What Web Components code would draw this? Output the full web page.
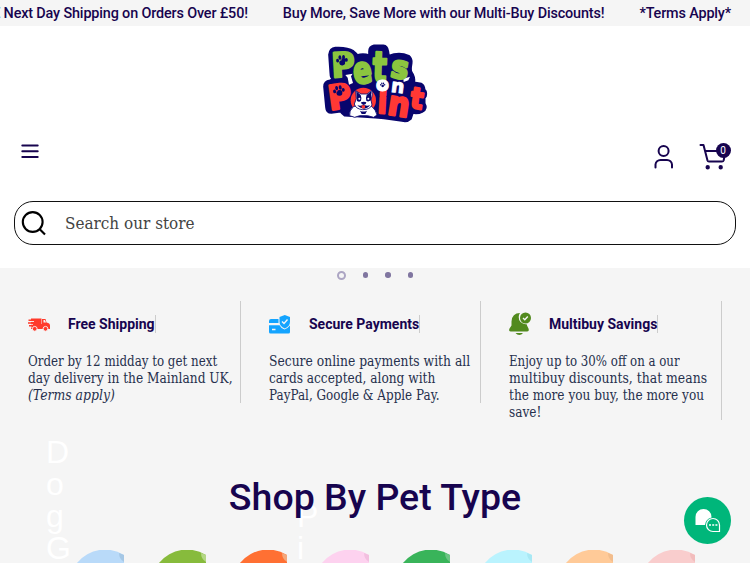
<!DOCTYPE html>
<html lang="en">
<head>
<meta charset="utf-8">
<title>Pets on Point</title>
<style>
    body {
        margin: 0;
        height: 563px;
        overflow: hidden;
        background: #f5f5f5;
        color: #17044f;
        font-family: Roboto, "Liberation Sans", sans-serif;
    }
</style>
</head>
<body>
<pets-page></pets-page>

<script>
// Base: every component clones its markup into an open shadow root
class PetsElement extends HTMLElement {
    constructor() {
        super();
        const template = document.createElement('template');
        template.innerHTML = this.render();
        this.attachShadow({ mode: 'open' }).appendChild(template.content);
    }
}

class AnnouncementBar extends PetsElement {
    render() {
        return `
        <style>
            :host {
                display: flex;
                justify-content: flex-end;
                gap: 35px;
                height: 26px;
                padding-right: 19px;
                overflow: hidden;
                background: #f5f5f5;
                font-size: 14.400px;
                font-weight: 500;
                letter-spacing: -.145px;
                line-height: 28px;
                white-space: nowrap;
            }
            span { flex: none; }
        </style>
        <span>FREE Next Day Shipping on Orders Over £50!</span>
        <span>Buy More, Save More with our Multi-Buy Discounts!</span>
        <span>*Terms Apply*</span>`;
    }
}

class PetsLogo extends PetsElement {
    render() {
        const paw = `<ellipse cx="0" cy="6" rx="8" ry="7"/><ellipse cx="-12" cy="-1" rx="4" ry="5"/><ellipse cx="-5" cy="-9" rx="4" ry="6"/><ellipse cx="5" cy="-9" rx="4" ry="6"/><ellipse cx="12" cy="-1" rx="4" ry="5"/>`;
        return `
        <style>
            :host { display: block; width: 130px; height: 95px; }
            svg { display: block; }
            text {
                font-family: "DejaVu Sans", sans-serif;
                font-weight: 700;
                text-anchor: middle;
                stroke-linejoin: round;
            }
            .green { fill: #8bc53f; stroke: #8bc53f; stroke-width: 8; }
            .red { fill: #ff3834; stroke: #ff3834; stroke-width: 8; }
            .white { fill: #fff; stroke: #fff; stroke-width: 3; }
        </style>
        <svg width="130" height="95" viewBox="0 0 390 285">
            <path d="M76 36Q112 34 130 46 140 54 142 58 160 52 178 59V46Q178 32 192 29H220Q232 30 234 46L236 60Q268 48 296 60 306 68 304 82 300 104 305 110 314 122 312 140L334 144Q342 148 343 162 350 166 347 180L343 186 343 202Q352 218 338 226 322 234 308 230L302 248Q292 258 276 254L222 246 196 244 104 238Q94 230 92 226L64 230Q50 230 49 214L43 152Q43 136 60 134L70 130Q62 126 62 112L58 56Q60 38 76 36Z" fill="#08056d" stroke="#08056d" stroke-width="7" stroke-linejoin="round"/>
            <path d="m106 117 22-4-5 8 6 20-12 5-4-21ZM280 128l20-6-5 11-14 5Z" fill="#fff"/>
            <g class="green">
                <text font-size="100" transform="translate(101 122) rotate(-3) scale(.94 1)">P</text>
                <text font-size="110" transform="translate(162 141) rotate(-8) scale(.75 1)">e</text>
                <text font-size="126" transform="translate(208 137) rotate(2) scale(.7 1)">t</text>
                <text font-size="92" transform="translate(265 126) rotate(10) scale(.95 1)">s</text>
            </g>
            <g class="red">
                <text font-size="100" transform="translate(94 217) rotate(-8) scale(.94 1)">P</text>
                <text font-size="86" transform="translate(216 231) rotate(3) scale(.9 1)">i</text>
                <text font-size="100" transform="translate(262 239) rotate(9) scale(.9 1)">n</text>
                <text font-size="86" transform="translate(317 217) rotate(8) scale(.9 1)">t</text>
            </g>
            <g class="white">
                <text font-size="58" transform="translate(218 164) rotate(-2)">o</text>
                <text font-size="56" transform="translate(261 170) rotate(7)">n</text>
            </g>
            <circle cx="218" cy="147" r="14" fill="#fff"/>
            <g fill="#08056d">
                <g transform="translate(96 74) rotate(-5) scale(1.1)">${paw}</g>
                <g transform="translate(87 165) rotate(-10) scale(1.1)">${paw}</g>
                <g transform="translate(218 147) scale(.5)">${paw}</g>
            </g>
            <circle cx="160" cy="193" r="38" fill="#ff3834"/>
            <g fill="#fff" stroke="#08056d" stroke-width="2.5" stroke-linejoin="round">
                <path d="M131 211q-15 14-12 28l15 5 15-5 24 0 18 5 10-7q-3-15-16-26Z"/>
                <path d="m139 188-2-24 16 10 18 0 14-11q5 11-2 29l3 15q-6 14-28 14-21-2-25-17Z"/>
            </g>
            <g fill="#08056d">
                <path d="m139 166 13 11q4 10 1 17-5 6-12 1ZM184 165l-14 12q-4 10-1 17 5 5 14-1Z"/>
                <path d="M153 199q9-4 16 0 0 7-8 8-8-1-8-8ZM142 207q8 4 17 0h5q8 4 16 0-5 10-18 11-13-1-20-11Z"/>
                <path d="M150 224q10 5 21 0l-5 10h-11Z"/>
            </g>
            <path d="M155 208h10v7q-5 5-10 0Z" fill="#ff3834"/>
            <circle cx="148" cy="188" r="3" fill="#fff"/><circle cx="175" cy="188" r="3" fill="#fff"/>
        </svg>`;
    }
}

class SiteHeader extends PetsElement {
    render() {
        return `
        <style>
            :host { display: block; height: 242px; background: #fff; }
            .brand { display: flex; justify-content: center; padding-top: 10px; height: 95px; }
            .tools {
                display: flex;
                justify-content: space-between;
                align-items: flex-start;
                height: 70px;
                box-sizing: border-box;
                padding: 10px 17px 0 17px;
            }
            .actions { display: flex; gap: 21px; }
            .cart { position: relative; }
            svg { display: block; fill: none; stroke: #17044f; stroke-width: 2; stroke-linecap: round; stroke-linejoin: round; }
            .badge {
                position: absolute;
                left: 16.500px;
                top: 1.500px;
                width: 15px;
                height: 15px;
                border-radius: 50%;
                background: #17044f;
                color: #fff;
                font-size: 10px;
                line-height: 16px;
                text-align: center;
            }
            search-box { margin: 0 14px; }
        </style>
        <div class="brand"><pets-logo></pets-logo></div>
        <div class="tools">
            <svg width="24" height="20" viewBox="0 0 24 20"><path d="M5.300 4.500h15.400M5.300 10.200h15.400M5.300 16h15.400"/></svg>
            <div class="actions">
                <svg width="28" height="32" viewBox="0 0 28 32"><circle cx="13.600" cy="10" r="5"/><path d="M5.500 26.500v-3a5 5 0 0 1 5-4.500h6.500a5 5 0 0 1 5 4.500v3"/></svg>
                <div class="cart">
                    <svg width="34" height="32" viewBox="0 0 34 32">
                        <path d="M1.500 4h3l4 15.500q.3 1 1.500 1h13q1.300 0 1.600-1l2-8.500M6 10h12"/>
                        <circle cx="8.700" cy="26.300" r="1.200" fill="#17044f"/><circle cx="21.700" cy="26.300" r="1.200" fill="#17044f"/>
                    </svg>
                    <span class="badge">0</span>
                </div>
            </div>
        </div>
        <search-box></search-box>`;
    }
}

class SearchBox extends PetsElement {
    render() {
        return `
        <style>
            :host {
                display: flex;
                align-items: center;
                box-sizing: border-box;
                height: 44px;
                border: 1px solid #111;
                border-radius: 19px;
                background: #fff;
                color: #444;
                font: 17px "Roboto Slab", "DejaVu Serif", serif;
            }
            svg { margin: 0 17px 0 6px; fill: none; stroke: #000; stroke-width: 2.100; }
            fit-text { padding-bottom: 1px; }
        </style>
        <svg width="27" height="28" viewBox="0 0 27 28"><circle cx="11.700" cy="13" r="9.900"/><path d="m18.500 20 5.500 5.500"/></svg>
        <fit-text size="17" width="130">Search our store</fit-text>`;
    }
}

// One line of slab text, spread over a set width
class FitText extends PetsElement {
    render() {
        return `
        <style>
            :host { display: block; white-space: nowrap; transform-origin: 0 50%; width: max-content; }
        </style>
        <slot></slot>`;
    }
    connectedCallback() {
        this.style.fontSize = this.getAttribute('size') + 'px';
        requestAnimationFrame(() => {
            const scale = Number(this.getAttribute('width')) / this.offsetWidth;
            this.style.transform = 'scaleX(' + scale + ')';
        });
    }
}

class SlideDots extends PetsElement {
    render() {
        return `
        <style>
            :host { display: flex; justify-content: center; align-items: center; gap: 17px; height: 14px; }
            i { width: 5.500px; height: 5.500px; border-radius: 50%; background: #8076a0; }
            .current { box-sizing: border-box; width: 9px; height: 9px; border: 2px solid #aca5c3; background: none; }
        </style>
        <i class="current"></i><i></i><i></i><i></i>`;
    }
}

class FeatureCard extends PetsElement {
    render() {
        return `
        <style>
            :host { display: block; box-sizing: border-box; padding-top: 9px; border-right: 1px solid #ccc; }
            .head { display: flex; align-items: center; height: 27px; }
            .icon { width: 40px; height: 24px; }
            h3 {
                margin: 0;
                height: 18px;
                border-right: 1px solid #ccc;
                font-size: 14px;
                font-weight: 700;
                line-height: 18px;
            }
            .copy {
                margin-top: 16px;
                margin-bottom: -1px;
                color: #26304d;
                font: 14px/17px "Roboto Slab", "DejaVu Serif", serif;
            }
        </style>
        <div class="head"><div class="icon"><slot name="icon"></slot></div><h3><slot name="title"></slot></h3></div>
        <div class="copy"><slot></slot></div>`;
    }
}

class FeatureRow extends PetsElement {
    render() {
        return `
        <style>
            :host {
                display: grid;
                grid-template-columns: 213px 212px 213px;
                column-gap: 28px;
                align-items: start;
                padding: 19px 0 0 28px;
                height: 119px;
            }
            svg { display: block; overflow: visible; }
        </style>
        <feature-card>
            <svg slot="icon" width="22" height="24" viewBox="0 0 22 24">
                <path d="M3 6.500h10.500v10.500H3ZM14 7h3.500l1 3.500q3.500.5 3.500 3v3.500h-9v-5h1Z" fill="#ff3a2b"/>
                <path d="M0 9.500h6M0 12.300h5M0 15h4" stroke="#f5f5f5" stroke-width=".900"/>
                <path d="M.500 8.200h5M0 11h5M1 13.700h4" stroke="#ff3a2b" stroke-width="1.400"/>
                <path d="M15.500 8h1.500l1 2.500h-2.500Z" fill="#f5f5f5"/>
                <g fill="#ff3a2b" stroke="#f5f5f5" stroke-width=".9"><circle cx="6.700" cy="16.800" r="2.400"/><circle cx="17.500" cy="16.800" r="2.400"/></g>
            </svg>
            <span slot="title">Free Shipping</span>
            <fit-text size="14" width="189">Order by 12 midday to get next</fit-text>
            <fit-text size="14" width="205">day delivery in the Mainland UK,</fit-text>
            <fit-text size="14" width="87"><em>(Terms apply)</em></fit-text>
        </feature-card>
        <feature-card>
            <svg slot="icon" width="22" height="24" viewBox="0 0 22 24">
                <path d="M0 9q0-2 2-2h7.500v4H0ZM0 13.300h10.500q1.500 3.200 5 4.200 3-1 5.500-4v6.500q0 1.500-1.500 1.500h-18Q0 21.500 0 20Z" fill="#14a4ff"/>
                <path d="m15.800 3 5.200 2v4.500q0 5-5.200 7-5.300-2-5.300-7V5Z" fill="#14a4ff"/>
                <path d="m13 9.500 2 2 3.500-4M3 17.500h3.500" fill="none" stroke="#f5f5f5" stroke-width="1.400"/>
            </svg>
            <span slot="title">Secure Payments</span>
            <fit-text size="14" width="201">Secure online payments with all</fit-text>
            <fit-text size="14" width="166">cards accepted, along with</fit-text>
            <fit-text size="14" width="171">PayPal, Google &amp; Apple Pay.</fit-text>
        </feature-card>
        <feature-card>
            <svg slot="icon" width="22" height="24" viewBox="0 0 22 24">
                <path d="M11 1Q3 1 2.500 9.500v4L.500 16.500q-1.200 3 1.300 3H18q2.500 0 1.500-3l-1.500-3v-1Q9.500 11.500 9.700 5 9.800 2.500 11 1ZM6.500 21h7.500q-1.500 2-3.700 2t-3.800-2Z" fill="#528a1e"/>
                <circle cx="16.500" cy="6" r="5.500" fill="#528a1e"/>
                <path d="m14 6 1.800 1.700 3-3.200" fill="none" stroke="#f5f5f5" stroke-width="1.400"/>
            </svg>
            <span slot="title">Multibuy Savings</span>
            <fit-text size="14" width="171">Enjoy up to 30% off on a our</fit-text>
            <fit-text size="14" width="198">multibuy discounts, that means</fit-text>
            <fit-text size="14" width="195">the more you buy, the more you</fit-text>
            <fit-text size="14" width="32">save!</fit-text>
        </feature-card>`;
    }
}

class PetTypes extends PetsElement {
    render() {
        const pets = [
            ['#b9daf9', '#a5c7e5'], ['#87bb3c', '#b4d785'], ['#ff7033', '#f4a77b'], ['#fdd2ef', '#f2bfdf'],
            ['#39b45a', '#6bc583'], ['#baf3fe', '#a8e8f4'], ['#ffca98', '#f2bd8d'], ['#f9cdcd', '#f2bcbc']
        ];
        // Only the top of each disc shows; its right side is cut straight
        const circles = pets.map(([fill, accent]) => `
            <svg width="55" height="14" viewBox="0 0 55 14">
                <path d="M0 36A36 36 0 0 1 55 5V36Z" fill="${fill}"/>
                <path d="M55 12q-5-3-5-9l5 2Z" fill="${accent}"/>
            </svg>`).join('');
        return `
        <style>
            :host { display: block; position: relative; height: 143px; overflow: hidden; }
            .label {
                position: absolute;
                color: #fff;
                font-family: "Liberation Sans", sans-serif;
                font-size: 32px;
                line-height: 32px;
            }
            .dog { left: 46px; top: 16px; }
            .pig { left: 297px; top: 80px; }
            h2 {
                position: relative;
                margin: 0;
                padding-top: 55px;
                height: 74.500px;
                font-size: 37.500px;
                font-weight: 500;
                line-height: 44px;
                text-align: center;
            }
            .circles { display: flex; gap: 26.500px; padding-left: 69px; }
            .circles svg { flex: none; display: block; }
        </style>
        <div class="label dog">D<br>o<br>g<br>G</div>
        <div class="label pig">P<br>i</div>
        <h2>Shop By Pet Type</h2>
        <div class="circles">${circles}</div>`;
    }
}

class ChatButton extends PetsElement {
    render() {
        return `
        <style>
            :host { position: absolute; left: 684px; top: 497px; width: 47px; height: 47px; border-radius: 50%; background: #00b67a; }
            svg { display: block; }
        </style>
        <svg width="47" height="47" viewBox="0 0 47 47" fill="none" stroke="#fff">
            <path d="M11.500 28V20a8 8 0 0 1 16 0v.5q-6 1.500-6.500 7.500Z" fill="#fff" stroke="none"/>
            <path d="M35.500 34.500h-6.500a6.500 6.500 0 1 1 6.500-6.500Z" stroke-width="1.200"/>
            <path d="M25 28h2M28.200 28h2M31.400 28h2" stroke-width="1.600"/>
        </svg>`;
    }
}

class PetsPage extends PetsElement {
    render() {
        return `
        <style>
            :host { display: block; }
        </style>
        <announcement-bar></announcement-bar>
        <site-header></site-header>
        <slide-dots></slide-dots>
        <feature-row></feature-row>
        <pet-types></pet-types>
        <chat-button></chat-button>`;
    }
}

customElements.define('announcement-bar', AnnouncementBar);
customElements.define('pets-logo', PetsLogo);
customElements.define('fit-text', FitText);
customElements.define('search-box', SearchBox);
customElements.define('site-header', SiteHeader);
customElements.define('slide-dots', SlideDots);
customElements.define('feature-card', FeatureCard);
customElements.define('feature-row', FeatureRow);
customElements.define('pet-types', PetTypes);
customElements.define('chat-button', ChatButton);
customElements.define('pets-page', PetsPage);
</script>
</body>
</html>
